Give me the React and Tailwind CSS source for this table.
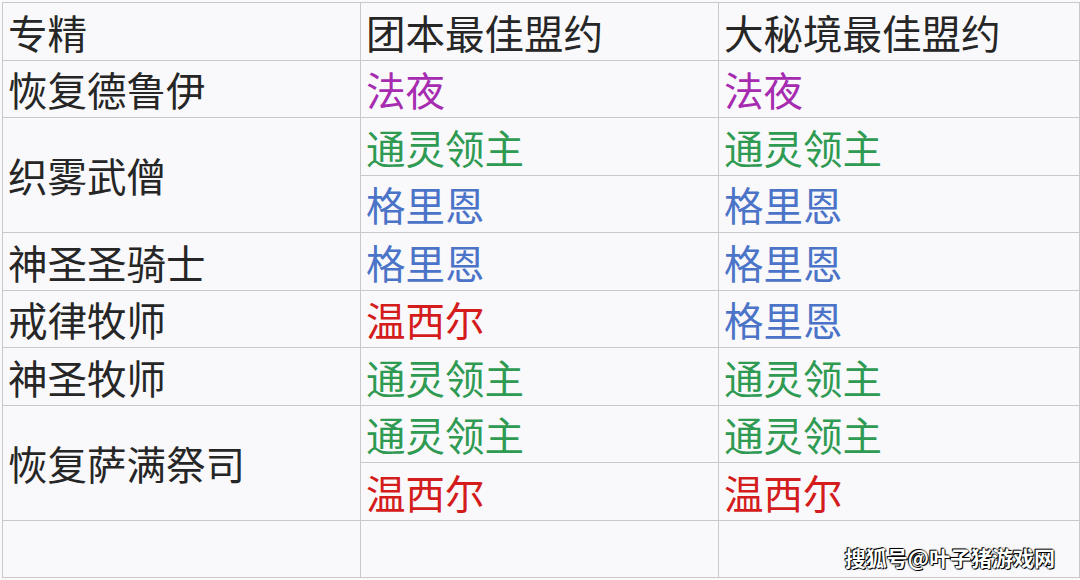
const tone = {
  purple: 'text-[#a62bb0]',
  green: 'text-[#2f9a52]',
  blue: 'text-[#4b74c8]',
  red: 'text-[#d41c1c]',
};

const rows = [
  { spec: '恢复德鲁伊', picks: [[['法夜', 'purple'], ['法夜', 'purple']]] },
  {
    spec: '织雾武僧',
    picks: [
      [['通灵领主', 'green'], ['通灵领主', 'green']],
      [['格里恩', 'blue'], ['格里恩', 'blue']],
    ],
  },
  { spec: '神圣圣骑士', picks: [[['格里恩', 'blue'], ['格里恩', 'blue']]] },
  { spec: '戒律牧师', picks: [[['温西尔', 'red'], ['格里恩', 'blue']]] },
  { spec: '神圣牧师', picks: [[['通灵领主', 'green'], ['通灵领主', 'green']]] },
  {
    spec: '恢复萨满祭司',
    picks: [
      [['通灵领主', 'green'], ['通灵领主', 'green']],
      [['温西尔', 'red'], ['温西尔', 'red']],
    ],
  },
];

const cell = 'flex items-center border-r border-b border-[#c9c9cc] pl-[5px]';

export default function App() {
  return (
    <div
      className="h-[580px] w-[1080px] overflow-hidden bg-[#f9f9fb] pl-[2px] pt-[2px] text-[39.5px] leading-none text-[#262626]"
      style={{ fontFamily: '"Noto Sans CJK SC", "Noto Sans", sans-serif' }}
    >
      <div className="grid grid-cols-[358px_358px_361px] auto-rows-[57.5px] border-t border-l border-[#c9c9cc]">
        <div className={`${cell} h-[58px]`}>专精</div>
        <div className={`${cell} h-[58px]`}>团本最佳盟约</div>
        <div className={`${cell} h-[58px]`}>大秘境最佳盟约</div>

        {rows.map((row) => (
          <Row key={row.spec} row={row} />
        ))}

        <div className={cell} />
        <div className={cell} />
        <div className="flex items-end justify-end border-r border-b border-[#c9c9cc] pr-[24px] pb-[9px]">
          <span
            className="text-[21px] font-bold text-white"
            style={{ textShadow: '0 0 2px #000, 0 0 1px #000, 1px 1px 0 #000, -1px -1px 0 #000' }}
          >
            搜狐号@叶子猪游戏网
          </span>
        </div>
      </div>
    </div>
  );
}

function Row({ row }) {
  const span = row.picks.length === 2 ? 'row-span-2' : '';
  return (
    <>
      <div className={`${cell} ${span}`}>{row.spec}</div>
      {row.picks.map((pair, i) => (
        <PickPair key={i} pair={pair} />
      ))}
    </>
  );
}

function PickPair({ pair }) {
  return (
    <>
      {pair.map(([name, color], j) => (
        <div key={j} className={`${cell} ${tone[color]}`}>
          {name}
        </div>
      ))}
    </>
  );
}
